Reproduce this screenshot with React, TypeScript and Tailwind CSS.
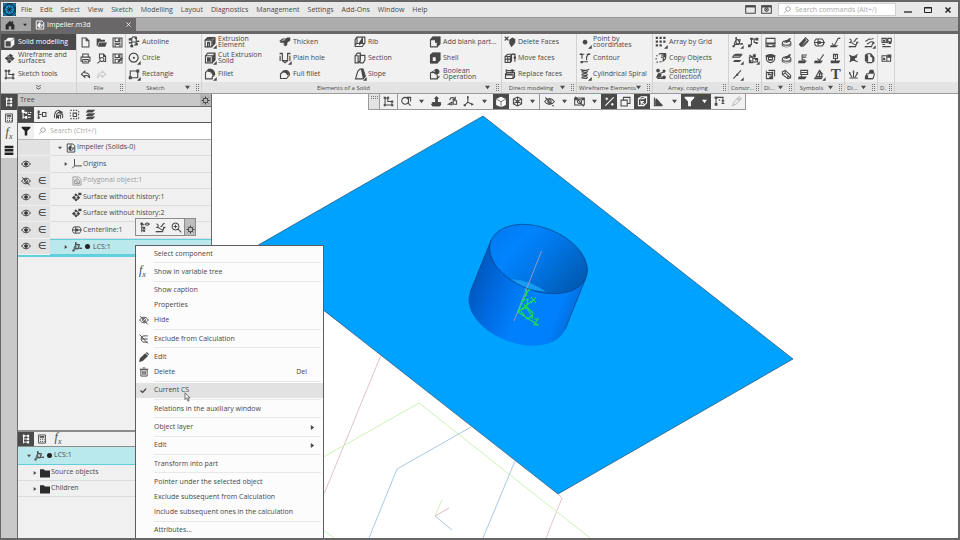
import type { ReactNode } from "react";
import clsx from "clsx";

// [stroked path, filled path] on a 16x16 grid
const ICONS: Record<string, [string, string?]> = {
  home: ["", "M8 1 1 8v7h5v-5h4v5h5V8l-2-2V2h-2v2z"],
  part: ["M2 1.500h9l3 3V14.500h-12z M8 5a3.500 3.500 0 1 0 3.500 3.500M8 2v6h6", "M8 5a3.500 3.500 0 0 0 0 7z"],
  solid: ["M1.500 5.500h9v9h-9z", "M2 5l4-4h9l-4 4zM11 6l4-4v9l-4 4z"],
  wire: ["M5 4l7 7M12 4l-7 8", "M9 1l4 2.500-3 3-4-2.500zM4 5l4 2.500-3 3.500-4-3zM12 5l3.500 3-3.500 3-3-3zM8 9.500l3 2.500-3 3-3.500-2z"],
  sketch: ["M3 3v10h10V8H7V3z", "M1 1h3v3H1zM1 12h3v3H1zM12 12h3v3h-3zM12 6.500h3v3h-3zM6 1h3v3H6z"],
  doc: ["M3 1.500h6l4 4v9H3zM9 1.500v4h4"],
  open: ["", "M1 2h5l1.500 2H13v3H4.500L2 13H1zM5 8h11l-2.500 6H2.500z"],
  save: ["M1.500 1.500h13v13h-13zM4.500 1.500v5h7v-5M4.500 14v-5h7v5M6 11h4", "M9 2h2v4H9z"],
  saveAs: ["M1.500 1.500h13v13h-13zM4.500 1.500v5h7v-5M4.500 14v-5h5", "M9 2h2v4H9zM8 14l1-4 5-4 2 2-5 5z"],
  print: ["M4 6V1.500h8V6M4 12H1.500V6h13v6H12M4 9.500h8v5H4zM6 12h4"],
  preview: ["M5 8V1.500h6l3 3v8h-3M11 1.500V5h3M8.500 6.500a3 3 0 1 0 .1 0M6.500 11.500L2 15"],
  undo: ["M7 3L2 7.500 7 12V9.500c4-.5 6 1 7 3.500 0-5-3-7.500-7-7.500z"],
  redo: ["M9 3l5 4.500L9 12V9.500c-4-.5-6 1-7 3.500 0-5 3-7.500 7-7.500z"],
  autoline: ["M5 15V4a3 3 0 0 1 6 0v7M5 8h6M2 4h3M8 12h5", "M1 3h3v3H1zM3 12h4v3H3zM9 1h3v3H9zM10 9h3v3h-3zM1 8h3v2H1zM12 6h3v2h-3z"],
  circle: ["M7.500 1.500a6 6 0 1 0 .1 0", "M6.500 6.500h2.500v2.500h-2.500z"],
  rect: ["M3 4h10v9H3z", "M1 11h4v4H1zM11 2h4v4h-4z"],
  extrude: ["M1.500 5.500h9v9h-9zM1.500 5.500L5 2h9.500v8l-4 4M4.500 8.500h3v6", "M2 5l3-3.500h9.500L11 5zM11 6l4-4v7l-4 4zM4 8h4v2H6v5H4z"],
  cut: ["M2 5h9v9.500H2zM2 5l3-3.500h9.500v9L11 14", "M11 5l4-4v10l-4 4zM4 7h5v6H4z"],
  fillet: ["M2 14.500V6l4-4c5-1 8 2 8 7l-3 3v2.500z", "M6 1c5-.5 9 3 9 8l-4 1C11 7 9 5 5 5z"],
  thicken: ["M1 7l4-3h8l-3 4H7v5", "M7 6l4-4h4v4l-4 3v3l-3 2V9H1l2-3z"],
  hole: ["M1 2h4M11 2h4M4.500 2v9.500l3.500 3 3.500-3V2M4.500 11.500h7M1.500 5v7M14.500 5v7", "M1 1h4v2H1zM11 1h4v2h-4z"],
  fullFillet: ["M2 14V8l4-4c5-2 8 1 8 5l-4 5z", "M3 7c3-6 10-5 11 1l-3 2C10 6 6 5 3 7z"],
  rib: ["M4 1.500h10.500v8L11 14H1.500V5zM4 1.500v8L1.500 12M7 12l4-5V2M4 10h10", "M9 5l3-3v8H6z"],
  section: ["M1.500 5l3-3.500h4V11l-3 3.500h-4zM8 4.500h6.500V11L12 14.500H8zM5.500 14V5h-4"],
  slope: ["M2 14.500l3-10 3-3h4l3 9-3 4z", "M9 1h3l3.500 11-3.500 3z"],
  blank: ["M2 5h9v9.500H2zM2 5l3-3.500h9.500v9L11 14", "M2 5l3-4h10v10l-4 3V9H8V5z"],
  shell: ["M2 4h9v10.500H2zM2 4l3-2.500h9.500v9L11 14", "M2 4l3-3h10v10l-4 4H2zM5 7v5h4V7z"],
  bool: ["M2 6h6M2 6v8.500h9V9M11 14l3-3", "M10 1a4 4 0 1 0 .1 0zM3 5l4-2 1 3-4 1z"],
  delFaces: ["M1 1l5 5M6 1L1 6", "M7 5l4-3 4 2v5l-5 6-3-5z"],
  moveFaces: ["M1.500 6h7v8h-7zM1.500 6L5 3h7M8 6l2-2v8l-2 2M1.500 9.500H10M5 6v8M14.500 3v10", "M11 2h4v2h-4zM13 6h3v3h-3z"],
  replFaces: ["M2 8h10v6H2zM2 8l2-2h10v6l-2 2M3 1.500v4M3 3.500h10", "M10 1l5 2.500L10 6zM2 8h9v2H2z"],
  point: ["", "M8 5a3.200 3.200 0 1 0 .1 0z"],
  contour: ["M2 3h5M10 3h4M4 3v6M12 4c-4 3-1 5-2 7M4 13h8", "M1 2h3v2H1zM12 2h3v2h-3zM2 12h3v3H2z"],
  spiral: ["M2 2c4 2 12 1 11-1M3 5c9 3 12-3 1-1M3 9c9 3 12-3 1-1M3 13c9 3 12-3 1-1"],
  grid: ["", "M1 1h3v3H1zM6 1h3v3H6zM11 1h3v3h-3zM1 6h3v3H1zM6 6h3v3H6zM11 6h3v3h-3zM1 11h3v3H1zM6 11h3v3H6z"],
  copy: ["M1.500 5h2M5 3.500L7 2M1.500 8v2M2 13.500h2M6 13h3M9 8V6M7 2h7v7l-3 3V4H8", "M8 2h7v5h-3V4z"],
  geom: ["M4 8l9-3M3 14h10M10 13l-7-4", "M4 1a2.500 2.500 0 1 0 .1 0zM12 2a2 2 0 1 0 .1 0zM4 8h5l-2 5H1zM12 10a2.500 2.500 0 1 0 .1 0z"],
  lcs: ["M6 1v9M1 14l5-4h9M3 10l3-6h6l-2 7H3M8 3l3 5", "M5 0h2v3H5zM13 9h3v2h-3zM1 12h3v3H1z"],
  cons2: ["M2 13l3-3V3h8M5 3v9M9 3v5h5", "M3 1h4v3H3zM11 1h4v4h-4zM0 11h4v4H0zM11 8h3v2h-3z"],
  plane: ["M3 3h11l-3 3H1zM3 12h9", "M5 1h10l-3 3H2zM4 10h10l-4 3H1z"],
  cons3: ["M2 6h5v8H2zM7 8h7v5H7zM10 1v6M2 3l5 3", "M7 2h4v4H7zM10 8h4v3h-4zM2 10h3v3H2z"],
  axis: ["M2 14L13 2", "M6 7h3v3H6z"],
  dim1: ["M1.500 2h13v12h-13zM1.500 10h13", "M1 8h14v2H1zM2 12l3-1v3zM14 12l-3-1v3z"],
  disc: ["M8 5c9 0 8 7 0 7s-8-6 0-7zM5 8l8-6", "M1 9c2 7 13 7 14 0v3c-3 4-11 4-14 0zM7 7l8-6-3 6-5 2z"],
  dim2: ["M2 6c0-5 12-5 12 0v3c0 2-3 5-6 5s-6-3-6-5zM5 6h6v4H5z", "M1 3h14v3H1zM6 9h4v2H6z"],
  dim3: ["M2 5h9v9H2zM5 2h9v9M5 8h4v6M2 2v2", "M4 6h3v3H4zM9 4h3v3H9zM6 11h4v3H6z"],
  prism: ["M2 4l4-2 8 7v4l-4 1-8-6zM6 2v4l8 7M6 6L2 8M10 10v4"],
  weld: ["M2 11L11 1l4 4L5 14zM4 13l8-9", "M2 10L10 2l2 2-8 9zM6 14l8-9 1 2-7 7z"],
  center: ["M3 3h9c3 3 3 7 0 10H3c-3-3-3-7 0-10zM0 8h16M6 3v10", "M5 6h5v4H5z"],
  rough: ["M3 9l3 4 6-11h3", "M1 12h11l-3 3H0z"],
  leader: ["M6 10V3h7M6 6h6M6 10h4", "M1 11h12l-3 4H0z"],
  check2: ["M5 8l3 3 6-9", "M1 11h12l-3 4H0z"],
  stamp: ["M5 2h6v6H5zM8 8v4", "M1 11h14l-2 4H1zM7 3h2v3H7z"],
  base: ["M4 2h10v6H4zM4 5h10M5 8v4", "M1 11h12l-3 4H0z"],
  warn: ["M8 2L3 11h9zM8 2l5 6", "M1 12h12l-2 3H0zM7 5h2v5H7z"],
  diag1: ["M2 3c3 0 4 3 1 5 6 0 3 4 9 3M2 14h9l2-6M8 7c4-1 1-4 6-5", "M1 13h3v2H1zM12 7h3v2h-3z"],
  diag2: ["M2 6c4 0 4-4 6-3s3 0 6-1M2 14h9l2-6M4 10c4 0 3-4 9-3", "M1 13h3v2H1zM13 7h2v3h-2z"],
  surf: ["M2 3c4 3 8 3 12-1M3 13c3-3 7-3 11 0", "M1 2c4 4 10 4 12 0v5c-4 0-4 3 0 6-4-3-8-3-11 1 2-6 2-8-1-12z"],
  sheet: ["M2 3l3-2h5l4 5v6l-3 2H5L2 11z", "M2 3l3-2 1 4v8l-4-2zM9 1l6 5v6l-3 1V7L9 5z"],
  rays: ["M8 12V4M6 12L2 6M10 12l4-6M2 13h12", "M7 2h2v4H7zM1 4l3 1-1 3zM15 4l-3 1 1 3z"],
  house: ["M2 13l2-6h3l2-5h4l2 6-2 6H3z", "M2 9h4v4h7v2H1zM8 3h5l1 4H8z"],
  spec: ["M1.500 2h6v6h-6zM10 2h5v5h-5zM2 11h4M2 14h12", "M8 2h2v7H8zM3 4h3v3H3zM11 7h4v3h-4z"],
  report: ["M1.500 4h7v8h-7zM8 12h6V6", "M3 7h3v3H3zM9 2h6v5H9z"],
  tree: ["M4 1v14M4 3h8M4 8h8M4 13h8", "M3 1h3v4H3zM10 1h3v4h-3zM10 6h3v4h-3zM10 11h3v4h-3z"],
  calc: ["M2.500 1.500h11v13h-11zM5 4h6v2H5zM5 9h1.500M8 9h1.500M11 9h1M5 12h1.500M8 12h1.500M11 12h1"],
  layers: ["", "M4 1h11l-4 4H1zM4 6h11l-4 4H1zM4 11h11l-4 4H1z"],
  bars: ["", "M1 1h14v4H1zM1 6.500h14v4H1zM1 12h14v4H1z"],
  treeNum: ["M3 2v12M3 5h4M3 12h4M10 5h1M10 8h4M10 12h4M13 5h2", "M1 1h4v4H1zM6 4h3v3H6zM6 10h3v4H6z"],
  treeSmall: ["M2 3v11M2 8h5M8 5h5v6H8z", "M1 2h3v4H1zM1 11h3v3H1z"],
  zones: ["M2 13c-1-8 4-12 7-11M5 14V8l3-3 6 3v5M8 14V9h3v5", "M8 1l6 3v3L9 5zM5 9h3v4H5z"],
  dashed: ["M2 2h2M6 2h2M10 2h2M2 5v2M2 9v2M2 14h2M6 14h2M10 14h2M14 3v2M14 7v2M14 12v2M6 6h5v5H6z"],
  filter: ["", "M1 1h14v2l-5 5v7H6V8L1 3z"],
  search: ["M10 1.500a4.500 4.500 0 1 0 .1 0M7 9L2 14.500"],
  gear: ["M8 4a4 4 0 1 0 .1 0M8 1v3M8 12v3M1 8h3M12 8h3M3 3l2 2M11 11l2 2M3 13l2-2M11 5l2-2"],
  eye: ["M1 8c4-6 10-6 14 0-4 6-10 6-14 0z", "M8 5a3 3 0 1 0 .1 0z"],
  eyeOff: ["M1 8c4-6 10-6 14 0-4 6-10 6-14 0zM2 2l12 13M8 5.500a2.500 2.500 0 1 0 .1 0"],
  origins: ["M4 0v11h12M4 11l-4 4"],
  poly: ["M1.500 1.500h9l4 4v9h-13zM4 7l4-3 4 3v5H4zM4 7l8 5M8 5v9"],
  surface: ["M2 9l5-5 5 5-5 5z", "M6 2l3 3-3 2-2-3zM3 6l3 3-3 3-3-3zM10 6l3 3-3 3-3-3zM6 10l3 2-3 3-2-3zM10 1h5v4h-5z"],
  folder: ["", "M0 2h6l2 2h8v11H0z"],
  edit: ["", "M0 16l1.500-6L10 2 14.500 6.500 6 14.500zM11 1L12.500 0 16 3.500 15 5z"],
  trash: ["M3 4.500h10v10H3zM1 3.500h14M6 1.500h4M6 6.500v6M8 6.500v6M10 6.500v6"],
  exclude: ["M14 3H8c-6 0-6 10 0 10h6M4 8h10M1 1l13 14"],
  tick: ["M2 8l4 4 8-9", "M1 7l5 3 8-8v4l-8 8-5-4z"],
  zoomArea: ["M6 2a5 5 0 1 0 .1 0M10 10l4 4M8 2h6v6M11 2v8"],
  orient: ["M2 10h12l-2 4H3z", "M8 0l4 4h-2v5h3l2 3-2 3H2L0 12l3-3h3V4H4z"],
  rotate: ["M2 12l5-3v4zM9 7h5v5H9zM4 6c1-5 5-4 8-2M12 1v4H8"],
  axes: ["M7 1v8l6 3M7 9l-5 5", "M6 0h2v4H6zM12 10l4 2-4 2zM1 12h3v3H1z"],
  wcube: ["M8 1.500l6 3v7l-6 3-6-3v-7zM2 4.500l6 3 6-3M8 1.500v13M2 11.500l6-4 6 4"],
  camera: ["M1 3h14v10H1zM8 5a3 3 0 1 0 .1 0M2 1l12 14", "M1 3h4v3H1zM11 3h4v3h-4z"],
  snap: ["M2 14L14 2M2 4h4M4 2v4M10 12h4M12 10v4"],
  windows: ["M1.500 6h9v8.500h-9zM5 6V2h9.500v9H11M5 2h9"],
  faces: ["M2 4l4-3h8v9l-4 4H2zM2 4h7l5-3M6 14V8h4M5 7l6 6"],
  shade: ["M2 2v12h12M4 5v7h8", "M4 3l4 3 2 3 4 4H4z"],
  tsection: ["M1 2h13M3 2v9M7 6h2M13 2v9M11 11h4", "M1 1h4v3H1zM1 10h4v4H1zM11 6h4v2h-4z"],
  dropper: ["M2 14l2-5 5-5 3 3-5 5zM10 3l2-2 3 3-2 2z"],
  wincam: ["M1 2.500h14v11H1zM8 5.500a2.500 2.500 0 1 0 .1 0", "M1 2h14v3H1zM7 7h2v2H7z"],
  win: ["M1 2.500h14v11H1z", "M1 2h14v3H1z"],
  toTree: ["M4 1v14M4 4h4M4 8h4M4 12h4M9 3c2-2 4-2 6 0-2 2-4 2-6 0", "M2 1h4v3H2zM6 7h3v3H6zM6 11h3v3H6z"],
  zoomFit: ["M6.500 1.500a5 5 0 1 0 .1 0M10 10l5 5M4 6.500h5M6.500 4v5"],
};

function Icon({ name, flyout, className = "size-3" }: { name: string; flyout?: boolean; className?: string }) {
  const [line, solid] = ICONS[name];
  return (
    <svg viewBox="0 0 16 16" aria-hidden="true" className={clsx("shrink-0 overflow-visible", className)}>
      {solid && <path d={solid} fill="currentColor" />}
      {line && <path d={line} fill="none" stroke="currentColor" strokeWidth={1.500} />}
      {flyout && <path d="M17 17h-5l5-5z" fill="currentColor" />}
    </svg>
  );
}

function Caret({ dir = "down", className = "size-1" }: { dir?: "down" | "right"; className?: string }) {
  return (
    <svg viewBox="0 0 6 6" aria-hidden="true" className={clsx("shrink-0", className)}>
      <path d={dir === "down" ? "M0 1h6L3 5z" : "M1 0v6l4-3z"} fill="currentColor" />
    </svg>
  );
}

function Grip() {
  return (
    <svg viewBox="0 0 3 7" aria-hidden="true" className="h-[7px] w-[3px] shrink-0 text-[#777]">
      <path d="M0 0h1v1H0zM2 0h1v1H2zM0 2h1v1H0zM2 2h1v1H2zM0 4h1v1H0zM2 4h1v1H2zM0 6h1v1H0zM2 6h1v1H2z" fill="currentColor" />
    </svg>
  );
}

function Fx() {
  return (
    <span className="font-['Liberation_Serif',serif] text-[12px] italic leading-3">
      f<span className="align-sub text-[8px] leading-none">x</span>
    </span>
  );
}

type Command = { icon: string; label: string; flyout?: boolean };

function Group({ title, width, caret, center, children }: {
  title: string;
  width: string;
  caret?: boolean;
  center?: boolean;
  children: ReactNode;
}) {
  return (
    <section className={clsx("flex shrink-0 flex-col border-r border-[#d2d2d2]", width)}>
      <div className="flex h-12">{children}</div>
      <div className="flex h-[11px] items-center gap-0.5 bg-[#e3e3e3] pl-0.5 pr-0.5">
        <span className={clsx("min-w-0 flex-1 whitespace-nowrap text-[6px] leading-[10px]", center && "text-center")}>{title}</span>
        {caret && <Caret className="mr-1 size-[5px]" />}
        <Grip />
      </div>
    </section>
  );
}

function CommandColumn({ items }: { items: Command[] }) {
  return (
    <div className="flex w-[75px] shrink-0 flex-col">
      {items.map((c) => (
        <button key={c.label} type="button" className="flex h-4 items-center gap-0.5 pl-0.5 text-left">
          <Icon name={c.icon} flyout={c.flyout} />
          <span className="whitespace-pre text-[7px] leading-[6px]">{c.label}</span>
        </button>
      ))}
    </div>
  );
}

function IconGrid({ cols, items, flyouts = [] }: { cols: string; items: string[]; flyouts?: string[] }) {
  return (
    <div className={clsx("grid auto-rows-[16px] content-start", cols)}>
      {items.map((name, i) => (
        <button key={i} type="button" aria-label={name} className="flex items-center justify-center">
          {name === "text" ? (
            <span className="font-['Liberation_Serif',serif] text-[15px] font-bold leading-4">T</span>
          ) : (
            <Icon name={name} flyout={flyouts.includes(name)} className={clsx("size-[11px]", name === "redo" && "text-[#c8c8c8]")} />
          )}
        </button>
      ))}
    </div>
  );
}

const MENU = ["File", "Edit", "Select", "View", "Sketch", "Modelling", "Layout", "Diagnostics", "Management", "Settings", "Add-Ons", "Window", "Help"];

const SKETCH: Command[] = [
  { icon: "autoline", label: "Autoline" },
  { icon: "circle", label: "Circle", flyout: true },
  { icon: "rect", label: "Rectangle", flyout: true },
];

const SOLID: Command[][] = [
  [
    { icon: "extrude", label: "Extrusion\nElement", flyout: true },
    { icon: "cut", label: "Cut Extrusion\nSolid", flyout: true },
    { icon: "fillet", label: "Fillet", flyout: true },
  ],
  [
    { icon: "thicken", label: "Thicken" },
    { icon: "hole", label: "Plain hole", flyout: true },
    { icon: "fullFillet", label: "Full fillet" },
  ],
  [
    { icon: "rib", label: "Rib" },
    { icon: "section", label: "Section" },
    { icon: "slope", label: "Slope", flyout: true },
  ],
  [
    { icon: "blank", label: "Add blank part..." },
    { icon: "shell", label: "Shell" },
    { icon: "bool", label: "Boolean\nOperation" },
  ],
];

const DIRECT: Command[] = [
  { icon: "delFaces", label: "Delete Faces" },
  { icon: "moveFaces", label: "Move faces" },
  { icon: "replFaces", label: "Replace faces" },
];

const WIREFRAME: Command[] = [
  { icon: "point", label: "Point by\ncoordinates", flyout: true },
  { icon: "contour", label: "Contour" },
  { icon: "spiral", label: "Cylindrical Spiral", flyout: true },
];

const ARRAYS: Command[] = [
  { icon: "grid", label: "Array by Grid", flyout: true },
  { icon: "copy", label: "Copy Objects" },
  { icon: "geom", label: "Geometry\nCollection" },
];

function TitleBar() {
  return (
    <header className="flex h-4 items-center border-b border-[#9a9a9a] bg-[#e8e8e8] pl-0.5">
      <svg viewBox="0 0 14 14" aria-label="Logo" className="size-[13px] shrink-0">
        <rect width="14" height="14" fill="#123c58" />
        <path d="M3 3l8 8M11 3l-8 8M7 2v10M2 7h10" stroke="#1593cf" strokeWidth="1" />
        <circle cx="7" cy="7" r="4" fill="none" stroke="#1ba4e2" strokeWidth="1.200" />
        <path d="M1 4V1h3M10 1h3v3M13 10v3h-3M4 13H1v-3" fill="none" stroke="#1ba4e2" />
        <circle cx="7" cy="7" r="1.500" fill="#0b2436" />
      </svg>
      <nav className="ml-[5px] flex flex-1 gap-2">
        {MENU.map((m) => (
          <button key={m} type="button" className="text-[7px] leading-3">{m}</button>
        ))}
      </nav>
      <div className="flex items-center gap-[5px]">
        <button type="button" aria-label="Layout"><Icon name="win" className="size-[11px]" /></button>
        <button type="button" aria-label="Capture"><Icon name="wincam" className="size-[11px]" /></button>
        <label className="ml-px flex h-[13px] w-[118px] items-center gap-1 border border-[#d0d0d0] bg-white pl-1 text-[#888]">
          <Icon name="search" className="size-2" />
          <input aria-label="Search commands" placeholder="Search commands (Alt+/)" className="min-w-0 flex-1 text-[7px] leading-[10px] outline-none placeholder:text-[#aaa]" />
        </label>
      </div>
      <div className="flex pl-0.5 text-[#222]">
        <button type="button" aria-label="Minimize" className="flex w-5 justify-center">
          <svg viewBox="0 0 8 8" className="size-2"><path d="M0 6h8" stroke="currentColor" strokeWidth="1.300" /></svg>
        </button>
        <button type="button" aria-label="Maximize" className="flex w-5 justify-center">
          <svg viewBox="0 0 8 8" className="size-2"><path d="M.5 1.500h7v5h-7zM0 2h8" fill="none" stroke="currentColor" /></svg>
        </button>
        <button type="button" aria-label="Close" className="flex w-5 justify-center">
          <svg viewBox="0 0 8 8" className="size-2"><path d="M1.500 1.500l5 5M6.500 1.500l-5 5" stroke="currentColor" strokeWidth="1.500" /></svg>
        </button>
      </div>
    </header>
  );
}

function TabBar() {
  return (
    <div className="flex h-4 border-b-[3px] border-[#696768] bg-[#adadad]">
      <button type="button" aria-label="Home" className="flex w-[30px] items-center justify-between bg-[#a4a4a4] px-1 text-[#2c2c2c]">
        <Icon name="home" className="size-[10px]" />
        <Caret />
      </button>
      <div className="flex w-[105px] items-center gap-0.5 bg-[#696768] pl-1 text-white">
        <Icon name="part" className="size-[10px]" />
        <span className="flex-1 text-[7px] leading-3">Impeller.m3d</span>
        <button type="button" aria-label="Close tab" className="pr-[5px]">
          <svg viewBox="0 0 6 6" className="size-[5px]"><path d="M.5 .5l5 5M5.500 .5l-5 5" stroke="currentColor" /></svg>
        </button>
      </div>
    </div>
  );
}

function Ribbon() {
  return (
    <div className="flex h-[60px] border-b border-[#9b9b9b] bg-[#f1f1f1]">
      <div className="flex w-[76px] shrink-0 flex-col border-r border-[#d2d2d2]">
        {[
          { icon: "solid", label: "Solid modelling" },
          { icon: "wire", label: "Wireframe and\nsurfaces" },
          { icon: "sketch", label: "Sketch tools" },
        ].map((m, i) => (
          <button key={m.label} type="button" className={clsx("flex h-4 items-center gap-[3px] pl-[3px] text-left", i === 0 && "bg-[#4a4a4a] text-white")}>
            <Icon name={m.icon} className="size-[11px]" />
            <span className="whitespace-pre text-[7px] leading-[6px]">{m.label}</span>
          </button>
        ))}
        <button type="button" aria-label="More modes" className="flex h-[11px] items-center justify-center bg-[#e3e3e3]">
          <svg viewBox="0 0 6 6" className="size-[5px]"><path d="M0 0l3 2 3-2M0 3l3 2 3-2" fill="none" stroke="currentColor" /></svg>
        </button>
      </div>
      <Group title="File" width="w-[49px]" center>
        <IconGrid cols="w-full grid-cols-3" items={["doc", "open", "save", "print", "preview", "saveAs", "undo", "redo"]} />
      </Group>
      <Group title="Sketch" width="w-[76px]" caret center>
        <CommandColumn items={SKETCH} />
      </Group>
      <Group title="Elements of a Solid" width="w-[300px]" caret center>
        {SOLID.map((col, i) => <CommandColumn key={i} items={col} />)}
      </Group>
      <Group title="Direct modeling" width="w-[75px]" caret center><CommandColumn items={DIRECT} /></Group>
      <Group title="Wireframe Elements" width="w-[76px]" caret><CommandColumn items={WIREFRAME} /></Group>
      <Group title="Array, copying" width="w-[76px]" center><CommandColumn items={ARRAYS} /></Group>
      <Group title="Constr..." width="w-[33px]">
        <IconGrid cols="w-full grid-cols-2" items={["lcs", "cons2", "plane", "cons3", "axis"]} flyouts={["lcs", "plane", "cons3", "axis"]} />
      </Group>
      <Group title="Di..." width="w-[33px]" caret>
        <IconGrid cols="w-full grid-cols-2" items={["dim1", "disc", "dim2", "disc", "dim3", "prism"]} />
      </Group>
      <Group title="Symbols" width="w-[50px]" caret center>
        <IconGrid cols="w-full grid-cols-3" items={["weld", "center", "rough", "leader", "check2", "stamp", "base", "warn", "text"]} flyouts={["warn"]} />
      </Group>
      <Group title="Di..." width="w-[33px]" caret>
        <IconGrid cols="w-full grid-cols-2" items={["diag1", "diag2", "surf", "sheet", "rays", "house"]} flyouts={["diag2"]} />
      </Group>
      <Group title="D." width="w-[17px]">
        <IconGrid cols="w-full grid-cols-1" items={["spec", "report"]} />
      </Group>
      <div className="mt-auto h-[11px] flex-1 bg-[#e3e3e3]" />
    </div>
  );
}

type TreeNode = { icon: string; label: string; root?: boolean; arrow?: "down" | "right"; view?: "eye" | "eyeOff"; calc?: boolean; muted?: boolean; current?: boolean };

const TREE: TreeNode[] = [
  { icon: "part", label: "Impeller (Solids-0)", root: true, arrow: "down" },
  { icon: "origins", label: "Origins", arrow: "right", view: "eye" },
  { icon: "poly", label: "Polygonal object:1", view: "eyeOff", calc: true, muted: true },
  { icon: "surface", label: "Surface without history:1", view: "eye", calc: true },
  { icon: "surface", label: "Surface without history:2", view: "eye", calc: true },
  { icon: "center", label: "Centerline:1", view: "eye", calc: true },
  { icon: "lcs", label: "LCS:1", arrow: "right", view: "eye", calc: true, current: true },
];

function SidePanel() {
  return (
    <aside className="flex w-[195px] shrink-0 flex-col border-x border-[#6b6b6b] bg-[#f0f0f0]">
      <div className="flex h-[13px] items-center justify-between border-b border-[#6b6b6b] bg-[#c8c8c8] pl-0.5">
        <h2 className="text-[7px] leading-3">Tree</h2>
        <button type="button" aria-label="Tree settings" className="flex h-3 w-[11px] items-center justify-center bg-[#b5b5b5] text-[#222]">
          <Icon name="gear" className="size-[9px]" />
        </button>
      </div>
      <div className="flex h-4 border-b border-[#5a5a5a]">
        {["treeNum", "treeSmall", "zones", "dashed", "layers"].map((n, i) => (
          <button key={n} type="button" aria-label={n} className={clsx("flex w-4 items-center justify-center", i === 0 && "bg-[#4a4a4a] text-white")}>
            <Icon name={n} className="size-[11px]" />
          </button>
        ))}
      </div>
      <div className="flex h-[17px] items-center border-b border-[#b5b5b5] bg-white">
        <button type="button" aria-label="Filter" className="flex h-full w-4 items-center justify-center bg-[#f0f0f0] text-[#222]">
          <Icon name="filter" className="size-[10px]" />
        </button>
        <label className="flex flex-1 items-center gap-1 pl-1 text-[#888]">
          <Icon name="search" className="size-2" />
          <input aria-label="Search tree" placeholder="Search (Ctrl+/)" className="min-w-0 flex-1 text-[7px] leading-3 outline-none placeholder:text-[#aaa]" />
        </label>
      </div>
      <ul className="grid h-[115px] shrink-0 auto-rows-fr">
        {TREE.map((n) => (
          <li key={n.label} className={clsx("flex text-[7px]", n.muted && "text-[#9a9a9a]")}>
            <span className="flex w-4 items-center justify-center border-b border-[#f0f0f0] bg-[#e2e2e2] text-[#333]">
              {n.view && <Icon name={n.view} className="size-[10px]" />}
            </span>
            <span className="flex w-4 items-center justify-center border-b border-[#f0f0f0] bg-[#e2e2e2] font-['DejaVu_Sans',sans-serif] text-[10px] leading-3 text-[#333]">
              {n.calc && "∈"}
            </span>
            <span className={clsx("flex flex-1 items-center gap-px border-b", n.root ? "pl-2" : "pl-3.5", n.current ? "border-t border-[#5fd0dc] bg-[#b9e8ed]" : "border-[#dcdcdc]")}>
              <span className="w-[7px]">{n.arrow && <Caret dir={n.arrow} />}</span>
              <Icon name={n.icon} className="size-[10px]" />
              {n.current && <span className="mx-0.5 size-[5px] rounded-full bg-[#222]" />}
              {n.label}
            </span>
          </li>
        ))}
      </ul>
      <div className="h-0.5 shrink-0 bg-[#62cfdd]" />
      <div className="flex-1" />
      <div className="flex h-[17px] shrink-0 border-b border-t-2 border-[#8c8c8c]">
        <button type="button" aria-label="Structure" className="flex w-4 items-center justify-center bg-[#4a4a4a] text-white"><Icon name="tree" className="size-[10px]" /></button>
        <button type="button" aria-label="Parameters" className="flex w-4 items-center justify-center"><Icon name="calc" className="size-[10px]" /></button>
        <button type="button" aria-label="Variables" className="flex w-4 items-center justify-center"><Fx /></button>
      </div>
      <ul className="h-[91px] shrink-0 text-[7px]">
        <li className="flex h-[18px] items-center border-b border-[#5fd0dc] bg-[#b9e8ed] pl-[9px]">
          <Caret className="mr-[3px] size-1" />
          <Icon name="lcs" className="size-[10px]" />
          <span className="ml-[3px] mr-0.5 size-[5px] rounded-full bg-[#222]" />
          LCS:1
        </li>
        {["Source objects", "Children"].map((t) => (
          <li key={t} className="flex h-4 items-center gap-px border-b border-[#dcdcdc] pl-[15px]">
            <Caret dir="right" className="mr-0.5 size-1" />
            <Icon name="folder" className="size-[10px] text-[#2c2c2c]" />
            {t}
          </li>
        ))}
      </ul>
    </aside>
  );
}

function Tool({ name, on, wide }: { name: string; on?: boolean; wide?: boolean }) {
  return (
    <button type="button" aria-label={name} className={clsx("flex items-center justify-center", wide ? "w-[17px]" : "w-4", on && "bg-[#4a4a4a] text-white", name === "dropper" && "text-[#c0c0c0]")}>
      <Icon name={name} className="size-[11px]" />
    </button>
  );
}

function Drop({ on }: { on?: boolean }) {
  return (
    <button type="button" aria-label="More" className={clsx("flex w-3.5 items-center justify-center", on && "bg-[#4a4a4a] text-white")}>
      <Caret className="size-[5px]" />
    </button>
  );
}

function ViewToolbar() {
  return (
    <div className="absolute left-[156px] top-0 flex h-4 border border-t-0 border-[#9a9a9a] bg-[#f1f1f1]">
      <div className="flex w-[11px] justify-center border-r border-[#9a9a9a] bg-[#e3e3e3] pt-0.5">
        <svg viewBox="0 0 7 3" className="h-[3px] w-[7px]"><path d="M0 0h1v1H0zM2 0h1v1H2zM4 0h1v1H4zM6 0h1v1H6zM0 2h1v1H0zM2 2h1v1H2zM4 2h1v1H4zM6 2h1v1H6z" fill="#777" /></svg>
      </div>
      <div className="flex border-r border-[#9a9a9a]"><Tool name="sketch" wide /></div>
      <div className="flex pr-0.5">
        <Tool name="zoomArea" /><Drop /><Tool name="orient" /><Tool name="rotate" /><Tool name="axes" wide /><Drop />
      </div>
      <div className="mr-px flex border-r border-[#9a9a9a]">
        <button type="button" aria-label="Shaded" className="flex w-4 items-center justify-center bg-[#4a4a4a]">
          <svg viewBox="0 0 16 16" className="size-3">
            <path d="M8 1l6.500 3v8L8 15l-6.500-3V4z" fill="#fff" />
            <path d="M1.500 4L8 7.500 14.500 4M8 7.500V15" fill="none" stroke="#4a4a4a" />
          </svg>
        </button>
        <Tool name="wcube" /><Drop />
      </div>
      <Tool name="eyeOff" /><Drop /><Tool name="camera" /><Drop />
      <Tool name="snap" on /><Tool name="windows" wide /><Tool name="faces" on />
      <Tool name="shade" wide /><Drop />
      <Tool name="filter" on /><Drop on />
      <Tool name="tsection" wide /><Tool name="dropper" wide />
    </div>
  );
}

function Viewport() {
  return (
    <main className="relative min-w-0 flex-1 overflow-hidden bg-white">
      <svg viewBox="212 94 746 444" preserveAspectRatio="xMinYMin slice" role="img" aria-label="3D model" className="absolute inset-0 size-full">
        <defs>
          <linearGradient id="outer" gradientUnits="userSpaceOnUse" x1="478" y1="270" x2="576" y2="308">
            <stop offset="0" stopColor="#0058c0" />
            <stop offset=".2" stopColor="#0068dc" />
            <stop offset=".5" stopColor="#0080fc" />
            <stop offset=".85" stopColor="#0080fc" />
            <stop offset="1" stopColor="#0070e0" />
          </linearGradient>
          <linearGradient id="inner" gradientUnits="userSpaceOnUse" x1="490" y1="241" x2="587" y2="278">
            <stop offset="0" stopColor="#007af0" />
            <stop offset=".25" stopColor="#0084ff" />
            <stop offset=".5" stopColor="#0078ea" />
            <stop offset="1" stopColor="#0058ae" />
          </linearGradient>
        </defs>
        <g fill="none" strokeWidth="1">
          <path d="M381 355L324 494M562 498l-16 40M558 494l4 4" stroke="#e3c4cb" />
          <path d="M320 459l99-56 171 135M320 528l14 10M435 516l7-16" stroke="#cdf2b5" />
          <path d="M471 427l-74 42-28 69M515 461l-32 77M435 516l17 14" stroke="#a9c8e2" />
          <path d="M435 516l14-8" stroke="#e3b8bd" />
        </g>
        <path d="M483 116L793 359 558 494 248 251z" fill="#00a2ff" stroke="#24506e" strokeWidth=".7" />
        <path d="M491 240.400L470 292.400A51 31.600 21 0 0 565 329.600L586 277.600z" fill="url(#outer)" />
        <path d="M491 240.400L470 292.400M586 277.600L565 329.600" stroke="#063f85" strokeWidth=".7" />
        <ellipse cx="538.500" cy="259" rx="51" ry="31.600" transform="rotate(21 538.500 259)" fill="url(#inner)" stroke="#063d7c" strokeWidth=".6" />
        <path d="M511 279Q530 280 546 292 525 290 511 279z" fill="#159cf2" />
        <path d="M541.500 251L514 321" stroke="#9b9fc4" strokeWidth=".9" />
        <g fill="none" stroke="#1fe04a" strokeWidth="1.100">
          <path d="M518 312l9-20M518 312l20 13M518 312l14-11M522 301l6-2-2 9-6 2M524 304l8 12-5 3-6-8M527 307l6 6-1 6" />
          <path d="M525 289l2 3 3-3M527 292l-1 4M531 297l5 6M536 297l-5 6M534 319h4l-4 6h5" />
        </g>
      </svg>
      <ViewToolbar />
    </main>
  );
}

type MenuEntry = { label: string; icon?: string; key?: string; sub?: boolean; active?: boolean };

const CONTEXT: MenuEntry[][] = [
  [{ label: "Select component" }],
  [{ label: "Show in variable tree", icon: "fx" }],
  [{ label: "Show caption" }, { label: "Properties" }, { label: "Hide", icon: "eyeOff" }],
  [{ label: "Exclude from Calculation", icon: "exclude" }],
  [{ label: "Edit", icon: "edit" }, { label: "Delete", icon: "trash", key: "Del" }],
  [{ label: "Current CS", icon: "tick", active: true }],
  [{ label: "Relations in the auxiliary window" }],
  [{ label: "Object layer", sub: true }],
  [{ label: "Edit", sub: true }],
  [{ label: "Transform into part" }],
  [{ label: "Pointer under the selected object" }, { label: "Exclude subsequent from Calculation" }, { label: "Include subsequent ones in the calculation" }],
  [{ label: "Attributes..." }],
];

function ContextMenu() {
  return (
    <div role="menu" className="absolute -bottom-px left-[134px] top-[243px] flex w-[189px] flex-col border border-[#5e5e5e] bg-[#fcfcfc]">
      {CONTEXT.map((group, g) => (
        <div key={g} className="contents">
          {g > 0 && (
            <div className="flex flex-1 items-center pl-[18px] pr-0.5">
              <div className="h-px flex-1 bg-[#e8e8e8]" />
            </div>
          )}
          {group.map((m) => (
            <button key={m.label} type="button" role="menuitem" className={clsx("flex h-[15px] shrink-0 items-center pr-2 text-left", m.active && "bg-[#e2e2e2]")}>
              <span className="flex w-[18px] items-center pl-[3px]">
                {m.icon === "fx" ? <Fx /> : m.icon && <Icon name={m.icon} className={m.icon === "tick" ? "ml-px size-[7px]" : "size-[10px]"} />}
              </span>
              <span className="flex-1 text-[7px] leading-[10px]">{m.label}</span>
              {m.key && <span className="pr-2 text-[7px] leading-[10px]">{m.key}</span>}
              {m.sub && <Caret dir="right" className="size-[5px]" />}
            </button>
          ))}
        </div>
      ))}
    </div>
  );
}

function MiniToolbar() {
  return (
    <div className="absolute left-[134px] top-[216px] flex h-[18px] w-[61px] border border-[#8c8c8c] bg-[#f1f1f1]">
      {["toTree", "diag1", "zoomFit"].map((n) => (
        <button key={n} type="button" aria-label={n} className="flex w-4 items-center justify-center">
          <Icon name={n} className="size-[11px]" />
        </button>
      ))}
      <button type="button" aria-label="Settings" className="flex flex-1 items-end justify-center border-l border-[#8c8c8c] bg-[#bdbdbd] pb-px text-[#222]">
        <Icon name="gear" className="size-[9px]" />
      </button>
    </div>
  );
}

export default function App() {
  return (
    <div className="relative flex h-screen flex-col overflow-hidden border-2 border-l border-[#666] bg-[#f0f0f0] font-['Open_Sans','Noto_Sans',sans-serif] text-[#484848]">
      <TitleBar />
      <TabBar />
      <Ribbon />
      <div className="flex min-h-0 flex-1">
        <nav className="flex w-4 shrink-0 flex-col bg-[#c9c9c9]">
          <button type="button" aria-label="Tree" className="flex h-4 items-center justify-center bg-[#4a4a4a] text-white"><Icon name="tree" className="size-[10px]" /></button>
          <button type="button" aria-label="Parameters" className="flex h-4 items-center justify-center bg-[#f0f0f0]"><Icon name="calc" className="size-[10px]" /></button>
          <button type="button" aria-label="Variables" className="flex h-4 items-center justify-center bg-[#f0f0f0]"><Fx /></button>
          <button type="button" aria-label="Layers" className="flex h-4 items-center justify-center bg-[#f0f0f0] text-[#222]"><Icon name="bars" className="size-[10px]" /></button>
        </nav>
        <SidePanel />
        <Viewport />
      </div>
      <MiniToolbar />
      <ContextMenu />
      <svg viewBox="0 0 8 12" aria-hidden="true" className="absolute left-[183px] top-[390px] h-[10px] w-[7px]">
        <path d="M1 1v8l2-2 1.500 4 1.500-.6L4.500 7H7z" fill="#fff" stroke="#333" strokeWidth=".8" />
      </svg>
    </div>
  );
}
